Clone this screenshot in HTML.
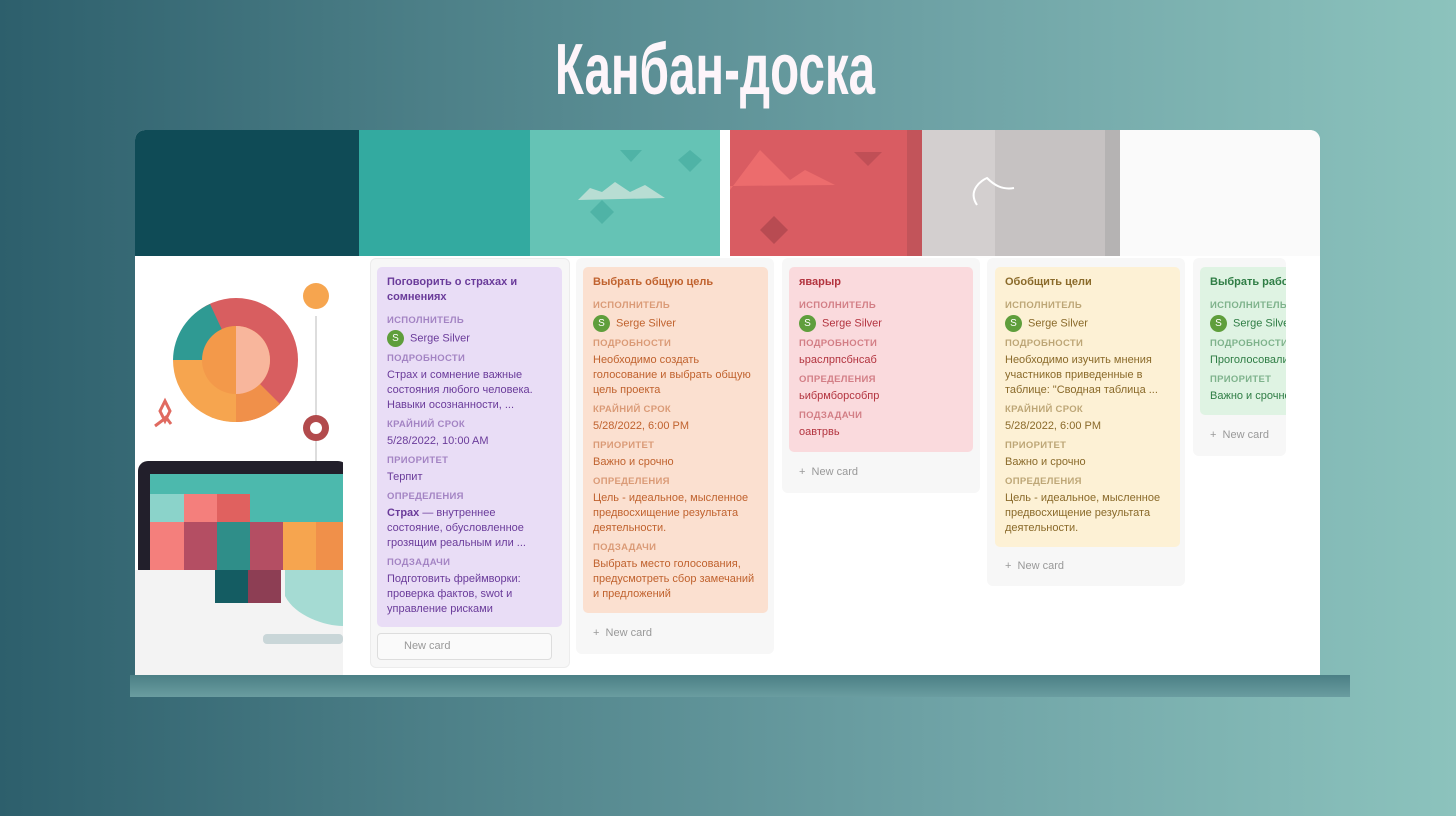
<!DOCTYPE html><html><head><meta charset="utf-8"><style>
*{margin:0;padding:0;box-sizing:border-box}
body{width:1456px;height:816px;overflow:hidden;position:relative;background:linear-gradient(90deg,#2d5f6c 0%,#4d8088 30%,#6fa3a6 65%,#8cc3bd 100%);font-family:"Liberation Sans","Noto Sans CJK SC",sans-serif}
.abs{position:absolute}
h1{position:absolute;left:415px;top:28px;width:600px;text-align:center;color:#fdf5fa;font:bold 72px "Liberation Sans Narrow","Liberation Sans",sans-serif;transform:scaleX(.66);transform-origin:center;white-space:nowrap;line-height:84px}
.shadow{left:130px;top:675px;width:1220px;height:22px;background:linear-gradient(180deg,#4b7f85,#6a9da0)}
.panel{left:135px;top:130px;width:1185px;height:545px;background:#fff;border-radius:10px 10px 0 0;overflow:hidden}
.col{position:absolute;background:#f7f7f7;border-radius:6px}
.card{position:absolute;border-radius:5px;padding:8px 10px 7px;font-size:11px;line-height:15px;overflow:hidden}
.card .t{font-weight:bold;margin-bottom:8px}
.card .l{font-size:9.5px;font-weight:bold;letter-spacing:.3px;opacity:.55;margin-top:4px;line-height:15px;margin-bottom:2px}
.av{display:inline-block;width:17px;height:17px;border-radius:50%;background:#5f9e3c;color:#fff;text-align:center;line-height:17px;font-size:10px;margin-right:6px;vertical-align:middle}
.nc{position:absolute;font-size:11px;color:#999}
</style></head><body>
<h1>Канбан-доска</h1>
<div class="abs shadow"></div>
<div class="abs panel">
 <div class="abs" style="left:0;top:0;width:224px;height:126px;background:#0f4b56"></div>
 <div class="abs" style="left:224px;top:0;width:171px;height:126px;background:#33aaa0"></div>
 <div class="abs" style="left:395px;top:0;width:190px;height:126px;background:#65c3b5"></div>
 <svg class="abs" style="left:395px;top:0" width="190" height="126"><path d="M48 70 L60 58 L72 62 L85 52 L100 62 L115 55 L135 68 Z" fill="#b8ddd3"/><path d="M160 20 L172 30 L160 42 L148 30Z" fill="#4fb3a6"/><path d="M72 70 L84 82 L72 94 L60 82Z" fill="#4fb3a6"/><path d="M90 20 L112 20 L101 32Z" fill="#4fb3a6"/></svg>
 <div class="abs" style="left:595px;top:0;width:177px;height:126px;background:#d95c62"></div>
 <div class="abs" style="left:772px;top:0;width:15px;height:126px;background:#c2545a"></div>
 <svg class="abs" style="left:595px;top:0" width="177" height="126"><path d="M0 60 L30 20 L60 50 L75 40 L105 55 L0 56Z" fill="#ec6c6d"/><path d="M30 100 L44 86 L58 100 L44 114Z" fill="#b84b52"/><path d="M124 22 L152 22 L138 36Z" fill="#c04f56"/></svg>
 <div class="abs" style="left:787px;top:0;width:73px;height:126px;background:#d3cfcf"></div>
 <div class="abs" style="left:860px;top:0;width:110px;height:126px;background:#c6c2c2"></div>
 <div class="abs" style="left:970px;top:0;width:15px;height:126px;background:#b5b3b3"></div>
 <svg class="abs" style="left:787px;top:0" width="183" height="126"><path d="M55 75 C45 60 60 50 65 48 C72 55 80 60 92 58" fill="none" stroke="#fff" stroke-width="2"/></svg>
 <div class="abs" style="left:985px;top:0;width:200px;height:126px;background:#fafafa"></div>
 <svg class="abs" style="left:0;top:126px" width="208" height="419">
  <rect width="208" height="419" fill="#fff"/>
  <circle cx="101" cy="104" r="62" fill="#d85e60"/>
  <path d="M101 104 L38 104 A62 62 0 0 1 75 48Z" fill="#2f9a93"/>
  <path d="M101 104 L38 104 A62 62 0 0 0 101 166Z" fill="#f6a54f"/>
  <path d="M101 104 L101 166 A62 62 0 0 0 145 148Z" fill="#f0904a"/>
  <circle cx="101" cy="104" r="34" fill="#f3994a"/>
  <path d="M101 70 A34 34 0 0 1 101 138Z" fill="#f8b69c"/>
  <circle cx="181" cy="40" r="13" fill="#f6a54f"/>
  <line x1="181" y1="60" x2="181" y2="290" stroke="#ddd" stroke-width="2"/>
  <circle cx="181" cy="172" r="13" fill="#b24a4c"/><circle cx="181" cy="172" r="6" fill="#fff"/>
  <path d="M25 155 l5 -10 l5 10 l-5 10z M20 170 l8 -6 M30 160 l6 8" stroke="#e06a60" stroke-width="3" fill="none"/>
  <rect x="3" y="205" width="210" height="150" rx="10" fill="#221f2b"/>
  <rect x="15" y="218" width="200" height="125" fill="#4cb9ad"/>
  <rect x="15" y="238" width="34" height="28" fill="#8bd3ca"/><rect x="49" y="238" width="33" height="28" fill="#f47f7c"/><rect x="82" y="238" width="33" height="28" fill="#e0615f"/>
  <rect x="15" y="266" width="34" height="48" fill="#f47f7c"/><rect x="49" y="266" width="33" height="48" fill="#b44e63"/><rect x="82" y="266" width="33" height="48" fill="#2f8e89"/><rect x="115" y="266" width="33" height="48" fill="#b44e63"/><rect x="148" y="266" width="33" height="48" fill="#f6a54f"/><rect x="181" y="266" width="30" height="48" fill="#f0904a"/>
  <rect x="-3" y="314" width="211" height="105" fill="#f3f3f3"/>
  <rect x="80" y="314" width="33" height="33" fill="#145c62"/><rect x="113" y="314" width="33" height="33" fill="#8d3e54"/>
  <path d="M150 314 L208 314 L208 370 C190 370 160 360 150 340Z" fill="#a5dbd3"/>
  <rect x="128" y="378" width="80" height="10" rx="4" fill="#c9d6d8"/>
 </svg>
 <div class="abs" style="left:208px;top:126px;width:977px;height:419px;background:#fff"></div>
 <div class="col" style="left:235px;top:128px;width:200px;height:410px;border:1px solid #ececec"></div>
 <div class="col" style="left:441px;top:128px;width:198px;height:396px"></div>
 <div class="col" style="left:647px;top:128px;width:198px;height:235px"></div>
 <div class="col" style="left:852px;top:128px;width:198px;height:328px"></div>
 <div class="col" style="left:1058px;top:128px;width:93px;height:198px"></div>

 <div class="card" style="left:242px;top:137px;width:185px;height:360px;background:#e9ddf6;color:#6a3b9a">
  <div class="t">Поговорить о страхах и сомнениях</div>
  <div class="l">ИСПОЛНИТЕЛЬ</div><div class="v"><span class="av">S</span>Serge Silver</div>
  <div class="l">ПОДРОБНОСТИ</div><div class="v">Страх и сомнение важные состояния любого человека. Навыки осознанности, ...</div>
  <div class="l">КРАЙНИЙ СРОК</div><div class="v">5/28/2022, 10:00 AM</div>
  <div class="l">ПРИОРИТЕТ</div><div class="v">Терпит</div>
  <div class="l">ОПРЕДЕЛЕНИЯ</div><div class="v"><b>Страх</b> — внутреннее состояние, обусловленное грозящим реальным или ...</div>
  <div class="l">ПОДЗАДАЧИ</div><div class="v">Подготовить фреймворки: проверка фактов, swot и управление рисками</div>
 </div>
 <div class="abs" style="left:242px;top:503px;width:175px;height:27px;border:1px solid #ddd;border-radius:4px;background:#fafafa;font-size:11px;color:#999;padding:6px 0 0 26px">New card</div>

 <div class="card" style="left:448px;top:137px;width:185px;height:346px;background:#fbe0d0;color:#c0622e">
  <div class="t">Выбрать общую цель</div>
  <div class="l">ИСПОЛНИТЕЛЬ</div><div class="v"><span class="av">S</span>Serge Silver</div>
  <div class="l">ПОДРОБНОСТИ</div><div class="v">Необходимо создать голосование и выбрать общую цель проекта</div>
  <div class="l">КРАЙНИЙ СРОК</div><div class="v">5/28/2022, 6:00 PM</div>
  <div class="l">ПРИОРИТЕТ</div><div class="v">Важно и срочно</div>
  <div class="l">ОПРЕДЕЛЕНИЯ</div><div class="v">Цель - идеальное, мысленное предвосхищение результата деятельности.</div>
  <div class="l">ПОДЗАДАЧИ</div><div class="v">Выбрать место голосования, предусмотреть сбор замечаний и предложений</div>
 </div>
 <div class="nc" style="left:458px;top:497px">+&nbsp;&nbsp;New card</div>

 <div class="card" style="left:654px;top:137px;width:184px;height:185px;background:#fadadd;color:#b3343f">
  <div class="t">яварыр</div>
  <div class="l">ИСПОЛНИТЕЛЬ</div><div class="v"><span class="av">S</span>Serge Silver</div>
  <div class="l">ПОДРОБНОСТИ</div><div class="v">ьраслрпсбнсаб</div>
  <div class="l">ОПРЕДЕЛЕНИЯ</div><div class="v">ьибрмборсобпр</div>
  <div class="l">ПОДЗАДАЧИ</div><div class="v">оавтрвь</div>
 </div>
 <div class="nc" style="left:664px;top:336px">+&nbsp;&nbsp;New card</div>

 <div class="card" style="left:860px;top:137px;width:185px;height:280px;background:#fdf1d5;color:#8a6a2a">
  <div class="t">Обобщить цели</div>
  <div class="l">ИСПОЛНИТЕЛЬ</div><div class="v"><span class="av">S</span>Serge Silver</div>
  <div class="l">ПОДРОБНОСТИ</div><div class="v">Необходимо изучить мнения участников приведенные в таблице: "Сводная таблица ...</div>
  <div class="l">КРАЙНИЙ СРОК</div><div class="v">5/28/2022, 6:00 PM</div>
  <div class="l">ПРИОРИТЕТ</div><div class="v">Важно и срочно</div>
  <div class="l">ОПРЕДЕЛЕНИЯ</div><div class="v">Цель - идеальное, мысленное предвосхищение результата деятельности.</div>
 </div>
 <div class="nc" style="left:870px;top:430px">+&nbsp;&nbsp;New card</div>

 <div class="card" style="left:1065px;top:137px;width:86px;height:148px;background:#dff3e3;color:#2f7d45;border-radius:5px 0 0 5px;white-space:nowrap">
  <div class="t">Выбрать работу</div>
  <div class="l">ИСПОЛНИТЕЛЬ</div><div class="v"><span class="av">S</span>Serge Silver</div>
  <div class="l">ПОДРОБНОСТИ</div><div class="v">Проголосовали</div>
  <div class="l">ПРИОРИТЕТ</div><div class="v">Важно и срочно</div>
 </div>
 <div class="nc" style="left:1075px;top:299px">+&nbsp;&nbsp;New card</div>
 <div class="abs" style="left:1151px;top:126px;width:34px;height:419px;background:#fff"></div>
</div>
</body></html>
